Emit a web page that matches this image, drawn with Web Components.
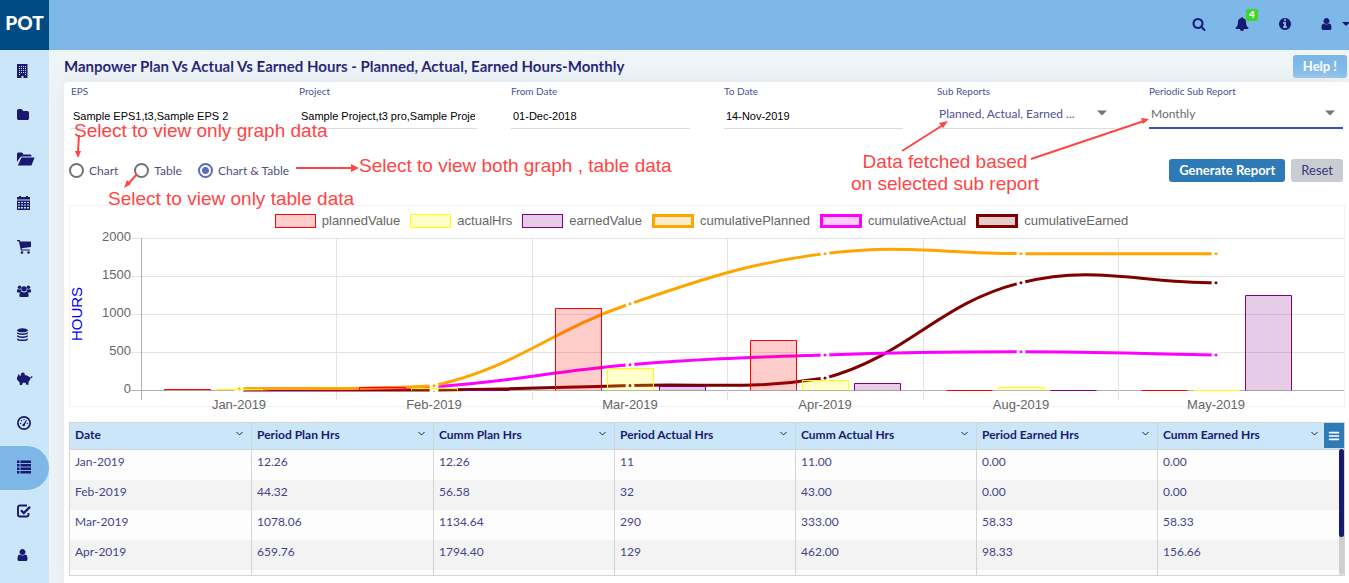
<!DOCTYPE html>
<html lang="en">
<head>
<meta charset="utf-8">
<meta name="viewport" content="width=device-width, initial-scale=1">
<title>POT - Manpower Plan Vs Actual Vs Earned Hours</title>
<style>
  body { margin: 0; font-family: Lato, "Open Sans", sans-serif; color: #191970; background: #eff4f7; }
</style>
</head>
<body>
<pot-app></pot-app>

<script>
function define(name, html, setup) {
  const template = document.createElement('template');
  template.innerHTML = html;
  customElements.define(name, class extends HTMLElement {
    constructor() {
      super();
      this.attachShadow({ mode: 'open' }).append(template.content.cloneNode(true));
    }
    connectedCallback() {
      if (setup && !this.ready) { this.ready = true; setup.call(this, this.shadowRoot); }
    }
  });
}

/* ---------- icons ---------- */
const ICONS = {
  search: ['0 0 1792 1792', '<path d="M1216 832q0-185-131.5-316.5t-316.5-131.5-316.5 131.5-131.5 316.5 131.5 316.5 316.5 131.5 316.5-131.5 131.5-316.5zm512 832q0 52-38 90t-90 38q-54 0-90-38l-343-342q-179 124-399 124-143 0-273.5-55.5t-225-150-150-225-55.5-273.5 55.5-273.5 150-225 225-150 273.5-55.5 273.5 55.5 225 150 150 225 55.5 273.5q0 220-124 399l343 343q37 37 37 90z"/>'],
  bell: ['0 0 1792 1792', '<path d="M1728 1408q0 52-38 90t-90 38h-448q0 106-75 181t-181 75-181-75-75-181h-448q-52 0-90-38t-38-90q50-42 91-88t85-119.5 74.500-158.500 50-206 19.500-260q0-152 117-282.500t307-158.500q-8-19-8-39 0-40 28-68t68-28 68 28 28 68q0 20-8 39 190 28 307 158.500t117 282.500q0 139 19.500 260t50 206 74.500 158.500 85 119.500 91 88z"/>'],
  info: ['0 0 1792 1792', '<path d="M1152 1376v-160q0-14-9-23t-23-9h-96v-512q0-14-9-23t-23-9h-320q-14 0-23 9t-9 23v160q0 14 9 23t23 9h96v320h-96q-14 0-23 9t-9 23v160q0 14 9 23t23 9h448q14 0 23-9t9-23zm-128-896v-160q0-14-9-23t-23-9h-192q-14 0-23 9t-9 23v160q0 14 9 23t23 9h192q14 0 23-9t9-23zm640 416q0 209-103 385.500t-279.500 279.500-385.500 103-385.500-103-279.500-279.500-103-385.500 103-385.500 279.500-279.500 385.500-103 385.500 103 279.500 279.500 103 385.500z"/>'],
  user: ['192 0 1792 1792', '<path d="M1536 1399q0 109-62.500 187t-150.500 78h-854q-88 0-150.500-78t-62.500-187q0-85 8.500-160.500t31.500-152 58.500-131 94-89 134.500-34.500q131 128 313 128t313-128q76 0 134.500 34.500t94 89 58.500 131 31.500 152 8.500 160.500zm-256-887q0 159-112.500 271.500t-271.500 112.500-271.500-112.500-112.500-271.500 112.500-271.500 271.500-112.500 271.500 112.500 112.500 271.500z"/>'],
  building: ['0 0 14 14', '<path fill-rule="evenodd" d="M0 0h10.500v14h-4v-2h-2v2h-4.500zM2 2v1h1V2zm2 0v1h1V2zm2 0v1h1V2zm2 0v1h1V2zM2 4v1h1V4zm2 0v1h1V4zm2 0v1h1V4zm2 0v1h1V4zM2 6v1h1V6zm2 0v1h1V6zm2 0v1h1V6zm2 0v1h1V6zM2 8v1h1V8zm2 0v1h1V8zm2 0v1h1V8zm2 0v1h1V8zM2 10v1h1v-1zm6 0v1h1v-1z"/>'],
  folder: ['64 0 1792 1792', '<path d="M1600 608v704q0 92-66 158t-158 66h-1088q-92 0-158-66t-66-158v-960q0-92 66-158t158-66h288q92 0 158 66t66 158v32h576q92 0 158 66t66 158z"/>'],
  open: ['0 0 18 14', '<path d="M0 10V1.500L1 .5h4l1 1V2.500h7.500L14.500 3.500V4.500H4.500L3 5.500zM4.500 5.500H17.600L14.500 13.500H.800z"/>'],
  calendar: ['0 0 14 14', '<path fill-rule="evenodd" d="M0 1h2V0h2v1h5V0h2v1h2v2.500H0zM0 4.500h13V14H0zM1 6v1h2V6zm3 0v1h2V6zm3 0v1h2V6zm3 0v1h2V6zM1 8.500v1h2v-1zm3 0v1h2v-1zm3 0v1h2v-1zm3 0v1h2v-1zM1 11v1.500h2V11zm3 0v1.500h2V11zm3 0v1.500h2V11zm3 0v1.500h2V11z"/>'],
  cart: ['0 0 14 14', '<path d="M0 0h2.800l.4 1.500H14V7L4.600 8.300l.3 1.200H13v1H3.900L1.900 1.200H0z"/><circle cx="5" cy="12.500" r="1.300"/><circle cx="11.500" cy="12.500" r="1.300"/>'],
  group: ['0 0 15 14', '<circle cx="2.800" cy="3" r="1.900"/><circle cx="12.200" cy="3" r="1.900"/><circle cx="7.500" cy="4.700" r="2.900"/><path d="M0 8V6.500Q.3 4.800 1.500 5q1.300.8 2.700.1.100 1.500.8 2.400-1 .2-1.600 1.200H1Q0 8.700 0 8zM15 8V6.500Q14.700 4.800 13.500 5q-1.300.8-2.700.1-.1 1.500-.8 2.400 1 .2 1.600 1.200H14q1 0 1-.7zM2.500 12q0-4.200 2.500-4.200 2.500 1.600 5 0 2.500 0 2.500 4.200 0 1.500-1.500 1.500H4q-1.500 0-1.500-1.500z"/>'],
  database: ['0 0 14 14', '<ellipse cx="5.500" cy="2.300" rx="5.500" ry="2"/><path d="M0 4.200q5.500 2.400 11 0v1q-1 1.700-5.500 1.700T0 5.200zM0 7.300q5.500 2.400 11 0v1q-1 1.700-5.500 1.700T0 8.300zM0 10.400q5.500 2.400 11 0v1q-1 1.700-5.500 1.700T0 11.400z"/>'],
  piggy: ['1 0 16 14', '<circle cx="6.800" cy="2.300" r="1.900"/><path d="M0 4.800l2-.3V2l2 1.700Q8.500 1.800 12.500 4.300l1.500 1.200q1.300 0 1.500-1.500l1 .300q0 2-2.100 2.300-.2 2-2 3.300l.2 2.900H10.200l-.6-2H6.800L6 13H3.800L3.500 10.300Q2.300 9.500 1.800 8.300L0 7.800z"/>'],
  gauge: ['0 0 14 14', '<circle cx="7" cy="7" r="6.100" fill="none" stroke="currentColor" stroke-width="1.700"/><circle cx="3.600" cy="7.500" r=".7"/><circle cx="4.600" cy="4.700" r=".7"/><circle cx="7" cy="3.600" r=".7"/><circle cx="10.400" cy="7.500" r=".7"/><circle cx="6.700" cy="9" r="1.300"/><path d="M6.200 8.500l3-4.700.7.400-2.200 5z"/>'],
  list: ['0 0 14 14', '<path d="M0 .5h2.500v2.500H0zM3.500.5H14v2.500H3.500zM0 4h2.500v2.500H0zM3.500 4H14v2.500H3.500zM0 7.500h2.500v2.500H0zM3.500 7.500H14v2.500H3.500zM0 11h2.500v2.500H0zM3.500 11H14v2.500H3.500z"/>'],
  check: ['0 0 14 14', '<path fill="none" stroke="currentColor" stroke-width="1.900" d="M10 1.500H3Q1 1.500 1 3.500V10.500Q1 12.500 3 12.500H9.500Q11.500 12.500 11.500 10.500V9"/><path fill="none" stroke="currentColor" stroke-width="2.300" d="M4 6.200l2.800 2.800L13 2.800"/>'],
  caret: ['0 0 14 14', '<path d="M2 4.500h10l-5 5z"/>'],
  down: ['0 0 8 14', '<path d="M0 5h8l-4 4z"/>'],
  chevron: ['0 0 14 14', '<path fill="none" stroke="currentColor" stroke-width="2" d="M1 4l6 6 6-6"/>'],
  menu: ['0 0 14 14', '<path d="M1 2h12v2H1zM1 6h12v2H1zM1 10h12v2H1z"/>']
};
define('pot-icon', `
<style>
  :host { display: inline-block; width: 14px; height: 14px; flex: none; }
  svg { display: block; width: 100%; height: 100%; fill: currentColor; }
</style>
<svg aria-hidden="true"></svg>`, function (root) {
  const [box, shape] = ICONS[this.getAttribute('name')];
  const svg = root.querySelector('svg');
  svg.setAttribute('viewBox', box);
  svg.innerHTML = shape;
});

/* ---------- top bar ---------- */
define('pot-header', `
<style>
  :host { display: flex; height: 50px; background: #7cb7e8; }
  .brand { width: 49px; display: grid; place-items: center; box-sizing: border-box; padding-bottom: 4px;
    background: #004b83; color: #fff; font-weight: 900; font-size: 19px; line-height: 24px; text-decoration: none; }
  nav { margin-left: auto; display: flex; align-items: center; gap: 29px; padding-bottom: 2px; }
  button { position: relative; display: flex; align-items: center; padding: 0; border: 0; background: none; color: #191970; font: inherit; }
  .badge { position: absolute; left: 11px; top: -8px; width: 12px; height: 12px; border-radius: 2px; background: #3ada25;
    color: #fff; font-weight: 900; font-size: 10px; line-height: 11px; text-align: center; }
  .account { gap: 7px; overflow: hidden; width: 28px; }
  .account pot-icon + pot-icon { width: 8px; }
</style>
<a class="brand" href="#home">POT</a>
<nav>
  <button aria-label="Search"><pot-icon name="search"></pot-icon></button>
  <button aria-label="Notifications"><pot-icon name="bell"></pot-icon><span class="badge">4</span></button>
  <button aria-label="Information"><pot-icon name="info"></pot-icon></button>
  <button class="account" aria-label="Account"><pot-icon name="user"></pot-icon><pot-icon name="down"></pot-icon></button>
</nav>`);

/* ---------- side bar ---------- */
define('pot-sidebar', `
<style>
  :host { display: block; width: 49px; flex: none; background: #cbe6f9; }
  a { display: flex; align-items: center; box-sizing: border-box; height: 44px; padding: 0 0 2px 17px; color: #191970; }
  a.on { background: #7cb7e8; border-radius: 0 22px 22px 0; }
  pot-icon.wide { width: 18px; }
  pot-icon.mid { width: 16px; }
</style>
<nav>
  <a href="#enterprise" aria-label="Enterprise"><pot-icon name="building"></pot-icon></a>
  <a href="#projects" aria-label="Projects"><pot-icon name="folder"></pot-icon></a>
  <a href="#library" aria-label="Library"><pot-icon class="wide" name="open"></pot-icon></a>
  <a href="#schedule" aria-label="Schedule"><pot-icon name="calendar"></pot-icon></a>
  <a href="#procurement" aria-label="Procurement"><pot-icon name="cart"></pot-icon></a>
  <a href="#resources" aria-label="Resources"><pot-icon name="group"></pot-icon></a>
  <a href="#assets" aria-label="Assets"><pot-icon name="database"></pot-icon></a>
  <a href="#finance" aria-label="Finance"><pot-icon class="mid" name="piggy"></pot-icon></a>
  <a href="#dashboard" aria-label="Dashboard"><pot-icon name="gauge"></pot-icon></a>
  <a href="#reports" aria-label="Reports" class="on"><pot-icon name="list"></pot-icon></a>
  <a href="#approvals" aria-label="Approvals"><pot-icon name="check"></pot-icon></a>
  <a href="#users" aria-label="Users"><pot-icon name="user"></pot-icon></a>
</nav>`);

/* ---------- form parts ---------- */
define('text-field', `
<style>
  :host { display: block; }
  label { display: block; font-size: 10px; line-height: 12px; color: #524f96; }
  input { display: block; box-sizing: border-box; width: 100%; height: 25px; margin-top: 7px; padding: 0 2px; border: 0;
    border-bottom: 1px solid #dcdcdc; border-radius: 0; background: none; outline: 0;
    font: 11px/24px "Liberation Sans", Arial, sans-serif; color: #000; }
</style>
<label for="field"></label>
<input id="field" type="text">`, function (root) {
  root.querySelector('label').textContent = this.getAttribute('label');
  root.querySelector('input').value = this.getAttribute('value');
});

define('select-field', `
<style>
  :host { display: block; color: #524f96; }
  label { display: block; font-size: 10px; line-height: 12px; color: #524f96; }
  .box { position: relative; display: grid; margin-top: 7px; }
  select { appearance: none; width: 100%; height: 25px; padding: 0 24px 4px 2px; border: 0; border-bottom: 1px solid #dcdcdc;
    border-radius: 0; background: none; outline: 0; font: 12px/16px Lato, sans-serif; color: inherit; }
  :host([active]) { color: #6b6b70; }
  :host([active]) select { border-bottom: 2px solid #3f51b5; }
  pot-icon { position: absolute; right: 6px; top: 2px; color: #757575; pointer-events: none; }
</style>
<label for="field"></label>
<div class="box"><select id="field"><option></option></select><pot-icon name="caret"></pot-icon></div>`, function (root) {
  root.querySelector('label').textContent = this.getAttribute('label');
  root.querySelector('option').textContent = this.getAttribute('value');
});

define('pot-button', `
<style>
  :host { display: block; }
  button { display: block; height: 23px; padding: 0 10px; border: 0; border-radius: 3px; background: #2d7ab6; color: #fff;
    font: 700 13px/23px Lato, sans-serif; }
  :host([kind="light"]) button { background: #7cb7e8; }
  :host([kind="plain"]) button { background: #c9cdd2; color: #36367a; font-weight: 400; }
</style>
<button type="button"><slot></slot></button>`);

define('report-filters', `
<style>
  :host { display: block; padding: 3px 6px 0 7px; }
  .fields { display: grid; grid-template-columns: 228fr 212fr 213fr 213fr 212fr 194fr; }
  .fields > * { margin-right: 34px; }
  .fields > :first-child { margin-right: 50px; }
  .fields > :last-child { margin-right: 0; }
  .row { display: flex; align-items: center; justify-content: space-between; padding-top: 30px; }
  .views, .actions { display: flex; gap: 6px; }
  .views { gap: 16px; margin-left: -2px; }
  label { display: flex; align-items: center; gap: 5px; font-size: 12px; line-height: 16px; color: #524f83; }
  input { appearance: none; box-sizing: border-box; width: 15px; height: 15px; margin: 0; border: 2px solid #737373; border-radius: 50%; }
  input:checked { border-color: #5c6bc0; background: radial-gradient(circle, #5c6bc0 3px, #fff 4px); }
</style>
<div class="fields">
  <text-field label="EPS" value="Sample EPS1,t3,Sample EPS 2"></text-field>
  <text-field label="Project" value="Sample Project,t3 pro,Sample Project 2"></text-field>
  <text-field label="From Date" value="01-Dec-2018"></text-field>
  <text-field label="To Date" value="14-Nov-2019"></text-field>
  <select-field label="Sub Reports" value="Planned, Actual, Earned ..."></select-field>
  <select-field label="Periodic Sub Report" value="Monthly" active></select-field>
</div>
<div class="row">
  <div class="views">
    <label><input type="radio" name="view" value="chart">Chart</label>
    <label><input type="radio" name="view" value="table">Table</label>
    <label><input type="radio" name="view" value="both" checked>Chart &amp; Table</label>
  </div>
  <div class="actions">
    <pot-button>Generate Report</pot-button>
    <pot-button kind="plain">Reset</pot-button>
  </div>
</div>`);

/* ---------- red notes laid over the filters ---------- */
define('help-notes', `
<style>
  :host { position: absolute; inset: 0 0 auto 0; height: 130px; pointer-events: none;
    font: 19px/22px "Liberation Sans", Arial, sans-serif; color: #ff4545; white-space: nowrap; }
  span, svg { position: absolute; }
  svg { top: 0; height: 130px; overflow: visible; stroke: #ff4545; fill: #ff4545; stroke-width: 2; }
  .left { left: 0; width: 310px; }
  .right { right: 0; width: 460px; }
  .graph { left: 10px; top: 38px; }
  .table { left: 44px; top: 106px; }
  .both { left: 295px; top: 73px; }
  .sub { right: 310px; top: 69px; text-align: center; }
</style>
<svg class="left" aria-hidden="true">
  <path d="M15 53l-1 17M73 92l-8 9M232 86h56"/>
  <path stroke="none" d="M14 76l-3-7h6zM60 106l3-8 4 4zM295 86l-8-4v8z"/>
</svg>
<svg class="right" aria-hidden="true">
  <path d="M13 69L54 43M142 77L255 39"/>
  <path stroke="none" d="M59 39l-5 7-4-5zM260 37l-6 5-2-6z"/>
</svg>
<span class="graph">Select to view only graph data</span>
<span class="table">Select to view only table data</span>
<span class="both">Select to view both graph , table data</span>
<span class="sub">Data fetched based<br>on selected sub report</span>`);

/* ---------- chart ---------- */
const MONTHS = ['Jan-2019', 'Feb-2019', 'Mar-2019', 'Apr-2019', 'Aug-2019', 'May-2019'];
const BARS = [
  { name: 'plannedValue', color: '255,0,0', data: [12.26, 44.32, 1078.06, 659.76, 0, 0] },
  { name: 'actualHrs', color: '255,255,0', data: [11, 32, 290, 129, 40, 0] },
  { name: 'earnedValue', color: '128,0,128', data: [0, 0, 58.33, 98.33, 0, 1254] }
];
const LINES = [
  { name: 'cumulativePlanned', color: '255,165,0', data: [12.26, 56.58, 1134.64, 1794.4, 1794.4, 1794.4] },
  { name: 'cumulativeActual', color: '255,0,255', data: [11, 43, 333, 462, 502, 462] },
  { name: 'cumulativeEarned', color: '128,0,0', data: [0, 0, 58.33, 156.66, 1411, 1411] }
];
function spline(points, low, high) {
  const clamp = y => Math.max(low, Math.min(high, y));
  const handles = points.map((p, i) => {
    const a = points[i - 1] || p, b = points[i + 1] || p;
    const before = Math.hypot(p[0] - a[0], p[1] - a[1]);
    const after = Math.hypot(b[0] - p[0], b[1] - p[1]);
    const fa = 0.4 * before / (before + after), fb = 0.4 * after / (before + after);
    return [[p[0] - fa * (b[0] - a[0]), clamp(p[1] - fa * (b[1] - a[1]))],
            [p[0] + fb * (b[0] - a[0]), clamp(p[1] + fb * (b[1] - a[1]))]];
  });
  return points.map((p, i) => i ? `C${handles[i - 1][1]} ${handles[i][0]} ${p}` : `M${p}`).join('');
}
define('hours-chart', `
<style>
  :host { display: block; border: 1px solid #f2f2f2; font: 13px/16px "Liberation Sans", Arial, sans-serif; color: #666; }
  ul { display: flex; justify-content: center; gap: 10px; height: 16px; margin: 0; padding: 7px 11px 0 0; list-style: none; }
  li { display: flex; align-items: center; gap: 6px; }
  i { box-sizing: border-box; width: 41px; height: 14px; border: 1px solid; }
  i.line { width: 42px; border-width: 3px; }
  svg { display: block; width: 100%; height: 177px; overflow: visible; }
  text { fill: #666; }
  .title { fill: #00f; font-size: 15px; }
</style>
<ul></ul>
<svg role="img" aria-label="Hours per month"></svg>`, function (root) {
  root.querySelector('ul').innerHTML = [...BARS, ...LINES].map(s =>
    `<li><i class="${LINES.includes(s) ? 'line' : ''}" style="border-color:rgb(${s.color});background:rgba(${s.color},.2)"></i>${s.name}</li>`).join('');
  const svg = root.querySelector('svg');
  const draw = () => {
    const width = svg.clientWidth, left = 71, top = 9, base = 161;
    const step = (width - left - 30) / 6;
    const y = v => base - v * (base - top) / 2000;
    const mid = i => Math.round(left + step * i + step / 2);
    let out = '';
    for (let v = 0; v <= 2000; v += 500) {
      out += `<path d="M${left - 10} ${y(v) + .5}H${width}" stroke="${v ? '#e4e4e4' : '#b0b0b0'}"/>`;
      out += `<text x="${left - 10}" y="${y(v) + 3}" text-anchor="end">${v}</text>`;
    }
    MONTHS.forEach((m, i) => {
      out += `<path d="M${Math.floor(left + step * i) + .5} ${top}V${base + 10}" stroke="${i ? '#e4e4e4' : '#b0b0b0'}"/>`;
      out += `<text x="${mid(i)}" y="${base + 19}" text-anchor="middle">${m}</text>`;
    });
    [...LINES].reverse().forEach(s => {
      const pts = s.data.map((v, i) => [mid(i), y(v)]);
      out += `<path d="${spline(pts, top, base)}" fill="none" stroke="rgb(${s.color})" stroke-width="3"/>`;
      pts.forEach(p => out += `<circle cx="${p[0]}" cy="${p[1]}" r="3" fill="rgb(${s.color})" stroke="#fff" stroke-width="3"/>`);
    });
    [...BARS].reverse().forEach((s, n) => {
      const offset = (2 - n) * 52 - 75;
      s.data.forEach((v, i) => {
        const x = mid(i) + offset + .5, t = Math.round(y(v)) + .5;
        out += `<path d="M${x} ${base + .5}V${t}h46V${base + .5}" fill="rgba(${s.color},.2)" stroke="rgb(${s.color})"/>`;
      });
    });
    out += `<text class="title" transform="translate(12 85) rotate(-90)" text-anchor="middle">HOURS</text>`;
    svg.innerHTML = out;
  };
  draw();
  new ResizeObserver(draw).observe(this);
});

/* ---------- table ---------- */
const COLUMNS = ['Date', 'Period Plan Hrs', 'Cumm Plan Hrs', 'Period Actual Hrs', 'Cumm Actual Hrs', 'Period Earned Hrs', 'Cumm Earned Hrs'];
const ROWS = [
  ['Jan-2019', '12.26', '12.26', '11', '11.00', '0.00', '0.00'],
  ['Feb-2019', '44.32', '56.58', '32', '43.00', '0.00', '0.00'],
  ['Mar-2019', '1078.06', '1134.64', '290', '333.00', '58.33', '58.33'],
  ['Apr-2019', '659.76', '1794.40', '129', '462.00', '98.33', '156.66'],
  ['', '', '', '', '', '', '']
];
define('hours-table', `
<style>
  :host { display: block; position: relative; box-sizing: border-box; height: 154px; overflow: hidden; border: 1px solid #d4d4d4; }
  table { width: 100%; border-collapse: separate; border-spacing: 0; table-layout: fixed; }
  th, td { box-sizing: border-box; padding: 0 5px; text-align: left; border-right: 1px solid #d4d4d4; }
  th:last-child, td:last-child { border-right: 0; }
  th { height: 27px; padding-bottom: 2px; background: #cbe6f9; border-bottom: 1px solid #d4d4d4; font-size: 12px; line-height: 16px; }
  th:last-child { padding-right: 23px; }
  th div { display: flex; justify-content: space-between; align-items: center; }
  th pot-icon { width: 7px; height: 7px; margin: 0 3px 4px 0; }
  td { height: 30px; padding-bottom: 6px; font-size: 12px; line-height: 16px; color: #45438c; background: #fdfdfd; }
  tr:nth-child(even) td { background: #f3f3f3; }
  button { position: absolute; top: 0; right: 0; width: 20px; height: 25px; padding: 0 4px; border: 0; background: #2d7ab6; color: #fff; display: flex; align-items: center; }
  button pot-icon { width: 12px; height: 12px; }
  .track { position: absolute; right: 0; top: 26px; bottom: 0; width: 5px; background: #cfcfcf; border-radius: 3px; }
  .thumb { height: 88px; background: #191970; border-radius: 3px; }
</style>
<table>
  <colgroup><col style="width:182px"><col style="width:182px"><col><col><col><col><col style="width:186px"></colgroup>
  <thead><tr></tr></thead><tbody></tbody>
</table>
<button type="button" aria-label="Grid menu"><pot-icon name="menu"></pot-icon></button>
<div class="track"><div class="thumb"></div></div>`, function (root) {
  root.querySelector('thead tr').innerHTML = COLUMNS.map(c => `<th scope="col"><div>${c}<pot-icon name="chevron"></pot-icon></div></th>`).join('');
  root.querySelector('tbody').innerHTML = ROWS.map(r => `<tr>${r.map(c => `<td>${c}</td>`).join('')}</tr>`).join('');
});

/* ---------- page ---------- */
define('pot-app', `
<style>
  :host { display: flex; flex-direction: column; min-height: 100vh; }
  .body { flex: 1; display: flex; }
  main { flex: 1; min-width: 0; display: flex; flex-direction: column; padding-left: 15px; }
  .title { display: flex; align-items: center; justify-content: space-between; height: 32px; padding-right: 2px; }
  h1 { margin: 0; font-size: 15px; line-height: 20px; font-weight: 700; }
  .card { position: relative; flex: 1; background: #fff; border-radius: 4px 0 0 0; box-shadow: 0 0 20px #dde6ec; }
  .results { display: grid; gap: 15px; padding: 23px 4px 7px 5px; }
</style>
<pot-header></pot-header>
<div class="body">
  <pot-sidebar></pot-sidebar>
  <main>
    <div class="title">
      <h1>Manpower Plan Vs Actual Vs Earned Hours - Planned, Actual, Earned Hours-Monthly</h1>
      <pot-button kind="light">Help !</pot-button>
    </div>
    <section class="card">
      <report-filters></report-filters>
      <div class="results">
        <hours-chart></hours-chart>
        <hours-table></hours-table>
      </div>
      <help-notes></help-notes>
    </section>
  </main>
</div>`);
</script>
</body>
</html>
